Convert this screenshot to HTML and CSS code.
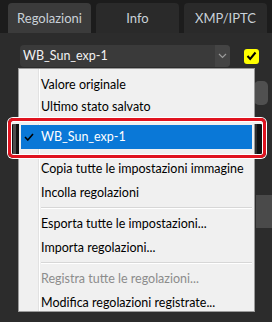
FILE: index.html
```html
<!DOCTYPE html>
<html>
<head>
    <title>Regolazioni</title>
    <link rel="stylesheet" href="styles.css">
</head>
<body>
    <div class="window">
        <div class="tabs">
            <div class="tab active">Regolazioni</div>
            <div class="tab">Info</div>
            <div class="tab">XMP/IPTC</div>
        </div>

        <div class="panel">
            <div class="preset-row">
                <div class="select">
                    <span class="select-value">WB_Sun_exp-1</span>
                    <span class="select-arrow">
                        <svg width="9" height="6" viewBox="0 0 9 6"><polyline points="1,1 4.5,4.5 8,1" fill="none" stroke="#9a9a9a" stroke-width="1.2"/></svg>
                    </span>
                </div>
                <div class="check-box">
                    <svg width="11" height="10" viewBox="0 0 11 10"><polyline points="1.5,5 4.2,8 9.5,1.5" fill="none" stroke="#000" stroke-width="2"/></svg>
                </div>
            </div>
            <div class="panel-body">
                <div class="knob"></div>
                <div class="side-block"></div>
            </div>
        </div>

        <div class="menu">
            <div class="menu-item small">Valore originale</div>
            <div class="menu-item small">Ultimo stato salvato</div>
            <div class="menu-item selected">
                <span class="tick">
                    <svg width="10" height="8" viewBox="0 0 10 8"><polyline points="1,4 3.8,7 9,1" fill="none" stroke="#000" stroke-width="1.6"/></svg>
                </span>
                WB_Sun_exp-1
            </div>
            <div class="menu-item">Copia tutte le impostazioni immagine</div>
            <div class="menu-item">Incolla regolazioni</div>
            <div class="menu-sep"></div>
            <div class="menu-item">Esporta tutte le impostazioni...</div>
            <div class="menu-item">Importa regolazioni...</div>
            <div class="menu-sep"></div>
            <div class="menu-item disabled">Registra tutte le regolazioni...</div>
            <div class="menu-item">Modifica regolazioni registrate...</div>
        </div>

        <div class="highlight-frame"></div>
    </div>
</body>
</html>
```

FILE: styles.css
```css
body {
    margin: 0;
    background-color: #1c1c1c;
    font-family: Lato, "Noto Sans", sans-serif;
}
.window {
    position: relative;
    width: 272px;
    height: 322px;
    overflow: hidden;
}
.tabs {
    display: flex;
    gap: 5px;
    padding: 3px 0 0 8px;
    height: 30px;
}
.tab {
    width: 83px;
    display: flex;
    align-items: center;
    justify-content: center;
    background-color: #2a2a2a;
    color: #c9d1d8;
    font-size: 13px;
    border-radius: 4px 4px 0 0;
}
.tab.active {
    background-color: #3b3b3b;
}
.panel {
    background-color: #2c2c2c;
    height: 289px;
}
.preset-row {
    display: flex;
    align-items: center;
    padding: 12px 0 0 20px;
}
.select {
    width: 210px;
    height: 22px;
    display: flex;
    background-color: #3a3a3a;
    border-radius: 4px;
    overflow: hidden;
}
.select-value {
    flex: 1;
    color: #f2f2f2;
    font-size: 12.5px;
    line-height: 22px;
    padding-left: 3px;
}
.select-arrow {
    width: 15px;
    display: flex;
    align-items: center;
    justify-content: center;
    background-color: #444;
}
.check-box {
    width: 15px;
    height: 15px;
    margin-left: 14px;
    background-color: #ffff00;
    border-radius: 3px;
    display: flex;
    align-items: center;
    justify-content: center;
}
.panel-body {
    display: flex;
    flex-direction: column;
    align-items: flex-end;
    padding-top: 14px;
}
.knob {
    width: 14px;
    height: 24px;
    margin-right: 4px;
    background-color: #505050;
    border-radius: 5px;
}
.side-block {
    width: 16px;
    height: 33px;
    margin-top: 90px;
    background-color: #4a4a4a;
}

/* context menu */
.menu {
    position: absolute;
    left: 18px;
    top: 68px;
    width: 237px;
    height: 244px;
    padding-top: 5px;
    box-sizing: border-box;
    background-color: #f0f0f0;
    border: 1px solid #9a9a9a;
    background-image: linear-gradient(to right, transparent 19px, #e2e2e2 19px, #e2e2e2 20px, #fff 20px, #fff 21px, transparent 21px);
}
.menu-item {
    height: 24px;
    line-height: 24px;
    padding-left: 22px;
    font-size: 12.5px;
    color: #000;
    white-space: nowrap;
    position: relative;
}
.menu-item.small {
    height: 22px;
    line-height: 22px;
}
.menu-item.selected {
    margin: 7px 2px 8px 2px;
    padding-left: 20px;
    background-color: #0a78d7;
    color: #fff;
}
.menu-item.disabled {
    color: #8c8c8c;
}
.tick {
    position: absolute;
    left: 3px;
    top: 8px;
    line-height: 0;
}
.menu-sep {
    height: 1px;
    margin: 2px 2px 3px 22px;
    background-color: #d7d7d7;
    border-bottom: 1px solid #fff;
}

/* annotation frame */
.highlight-frame {
    position: absolute;
    left: 8px;
    top: 118px;
    width: 252px;
    height: 34px;
    border: 3px solid #e0131f;
    border-radius: 5px;
    box-shadow: 0 0 0 1px #fff, inset 0 0 0 1px #fff, inset 0 2px 0 1px #f0f0f0;
    background: linear-gradient(to right, #121212 0 2px, #4c4c4c 2px 5px, #121212 5px 8px, transparent 8px calc(100% - 6px), #121212 calc(100% - 6px));
}
```
